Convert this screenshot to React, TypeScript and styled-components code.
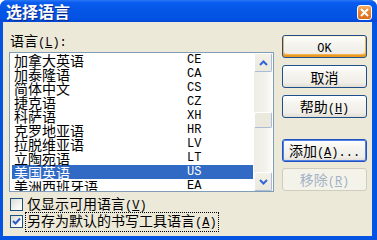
import styled, { createGlobalStyle } from "styled-components";

const GlobalStyle = createGlobalStyle`
  html, body {
    margin: 0;
    padding: 0;
    background: #ffffff;
  }
  body {
    font-family: "Noto Sans CJK SC", "Liberation Sans", sans-serif;
  }
`;

const Window = styled.div`
  width: 377px;
  height: 240px;
  display: flex;
  flex-direction: column;
  background: #0553e1;
  border-radius: 7px 7px 0 0;
  overflow: hidden;
`;

const TitleBar = styled.div`
  height: 22px;
  flex: none;
  display: flex;
  align-items: center;
  justify-content: space-between;
  padding: 0 5px 0 6px;
  background: linear-gradient(180deg, #2b78f6 0%, #0a5cf0 12%, #0356e6 45%, #0352e4 85%, #0448d2 100%);
`;

const Title = styled.span`
  color: #ffffff;
  font-size: 16px;
  font-weight: bold;
  line-height: 22px;
  text-shadow: 1px 1px 0 #0a2a8a;
`;

const CloseBox = styled.div`
  width: 15px;
  height: 15px;
  margin-top: 2px;
  box-sizing: border-box;
  border: 1px solid #ffffff;
  border-radius: 3px;
  background: linear-gradient(180deg, #f4b067 0%, #e8842f 45%, #dc6a1c 100%);
  display: flex;
  align-items: center;
  justify-content: center;
`;

const Body = styled.div`
  flex: 1;
  margin: 0 5px 4px 3px;
  background: #ece9d8;
  display: flex;
  gap: 8px;
  padding-left: 6px;
`;

const LeftColumn = styled.div`
  width: 265px;
  display: flex;
  flex-direction: column;
  padding-top: 10px;
`;

const FieldLabel = styled.div`
  font-size: 14px;
  line-height: 16px;
  height: 16px;
  padding-left: 1px;
  margin-bottom: 4px;
  color: #000;
`;

const Asc = styled.span`
  font-family: "Liberation Mono", "DejaVu Sans Mono", monospace;
  font-size: 12px;
`;

const Key = styled.span`
  text-decoration: underline;
`;

const ListBox = styled.div`
  height: 140px;
  box-sizing: border-box;
  border: 1px solid #7f9db9;
  background: #ffffff;
  display: flex;
`;

const Items = styled.div`
  flex: 1;
  overflow: hidden;
  padding: 0 1px 0 2px;
`;

const Row = styled.div<{ $selected?: boolean }>`
  display: grid;
  grid-template-columns: 173px 1fr;
  height: 14px;
  line-height: 14px;
  font-size: 14px;
  padding-left: 2px;
  white-space: nowrap;
  color: ${(p) => (p.$selected ? "#ffffff" : "#000000")};
  background: ${(p) => (p.$selected ? "#316ac5" : "transparent")};
`;

const Code = styled.span`
  font-family: "Liberation Mono", "DejaVu Sans Mono", monospace;
  font-size: 12px;
`;

const ScrollBar = styled.div`
  width: 18px;
  margin-right: 1px;
  display: flex;
  flex-direction: column;
  background: linear-gradient(90deg, #eeede5 0%, #f3f1ec 60%, #fbfbf8 100%);
`;

const ScrollButton = styled.div`
  height: 19px;
  flex: none;
  box-sizing: border-box;
  border: 1px solid;
  border-color: #ffffff #a9bbd9 #a9bbd9 #ffffff;
  border-radius: 2px;
  background: linear-gradient(180deg, #f3f1e8 0%, #ebe9dc 100%);
  display: flex;
  align-items: center;
  justify-content: center;
`;

const Track = styled.div`
  flex: 1;
`;

const Thumb = styled.div<{ $offset: number }>`
  height: 16px;
  margin-top: ${(p) => p.$offset}px;
  box-sizing: border-box;
  border: 1px solid;
  border-color: #ffffff #a9bbd9 #a9bbd9 #ffffff;
  border-radius: 2px;
  background: #ebe9dc;
`;

const Options = styled.div`
  margin-top: 4px;
  display: flex;
  flex-direction: column;
`;

const CheckRow = styled.div`
  height: 17px;
  display: flex;
  align-items: center;
  gap: 3px;
  padding-left: 1px;
  font-size: 14px;
  line-height: 15px;
`;

const Box = styled.div`
  width: 13px;
  height: 13px;
  flex: none;
  box-sizing: border-box;
  border: 1px solid #1c5180;
  background: linear-gradient(135deg, #dcdbd5 0%, #f4f4f0 60%, #ffffff 100%);
  display: flex;
  align-items: center;
  justify-content: center;
`;

const CheckText = styled.span<{ $focused?: boolean }>`
  padding: 0 1px;
  outline: ${(p) => (p.$focused ? "1px dotted #000" : "none")};
  white-space: nowrap;
`;

const RightColumn = styled.div`
  display: flex;
  flex-direction: column;
  gap: 7px;
  padding-top: 13px;
`;

const Button = styled.button<{ $variant?: "hot" | "default"; $gapBefore?: number }>`
  width: 85px;
  height: 23px;
  padding: 0;
  margin-top: ${(p) => p.$gapBefore ?? 0}px;
  box-sizing: border-box;
  border: 1px solid ${(p) => (p.$variant === "default" ? "#2150c0" : "#1d4f8c")};
  border-radius: 3px;
  background: linear-gradient(180deg, #ffffff 0%, #f5f4ef 35%, #efeee8 80%, #e2ddd2 100%);
  font-family: "Noto Sans CJK SC", sans-serif;
  font-size: 14px;
  line-height: 20px;
  color: #000000;
  box-shadow: ${(p) =>
    p.$variant === "hot"
      ? "inset 0 -2px 0 #e99a23, inset 2px -4px 0 -1px #f3b352, inset -2px -4px 0 -1px #f3b352, inset 0 1px 0 #fff2d4"
      : p.$variant === "default"
      ? "inset 0 0 0 1px #4f82e3"
      : "none"};

  &:disabled {
    border-color: #cfccc0;
    background: #f4f3ea;
    color: #a3b1c7;
  }
`;

const languages: [string, string][] = [
  ["加拿大英语", "CE"],
  ["加泰隆语", "CA"],
  ["简体中文", "CS"],
  ["捷克语", "CZ"],
  ["科萨语", "XH"],
  ["克罗地亚语", "HR"],
  ["拉脱维亚语", "LV"],
  ["立陶宛语", "LT"],
  ["美国英语", "US"],
  ["美洲西班牙语", "EA"],
  ["蒙古语", "MN"],
];

function Chevron({ up }: { up?: boolean }) {
  return (
    <svg width="9" height="6" viewBox="0 0 9 6">
      <polyline
        points={up ? "1,5 4.5,1.5 8,5" : "1,1 4.5,4.5 8,1"}
        fill="none"
        stroke="#3465d8"
        strokeWidth="2"
      />
    </svg>
  );
}

export default function App() {
  return (
    <>
      <GlobalStyle />
      <Window>
        <TitleBar>
          <Title>选择语言</Title>
          <CloseBox>
            <svg width="9" height="9" viewBox="0 0 9 9">
              <path d="M1 1 L8 8 M8 1 L1 8" stroke="#ffffff" strokeWidth="2" />
            </svg>
          </CloseBox>
        </TitleBar>
        <Body>
          <LeftColumn>
            <FieldLabel>
              语言<Asc>(<Key>L</Key>):</Asc>
            </FieldLabel>
            <ListBox>
              <Items>
                {languages.map(([name, code]) => (
                  <Row key={code} $selected={code === "US"}>
                    <span>{name}</span>
                    <Code>{code}</Code>
                  </Row>
                ))}
              </Items>
              <ScrollBar>
                <ScrollButton>
                  <Chevron up />
                </ScrollButton>
                <Track>
                  <Thumb $offset={40} />
                </Track>
                <ScrollButton>
                  <Chevron />
                </ScrollButton>
              </ScrollBar>
            </ListBox>
            <Options>
              <CheckRow>
                <Box />
                <CheckText>
                  仅显示可用语言<Asc>(<Key>V</Key>)</Asc>
                </CheckText>
              </CheckRow>
              <CheckRow>
                <Box>
                  <svg width="9" height="9" viewBox="0 0 9 9">
                    <polyline points="1,4 3.5,6.5 8,1.5" fill="none" stroke="#2c5cc5" strokeWidth="2" />
                  </svg>
                </Box>
                <CheckText $focused>
                  另存为默认的书写工具语言<Asc>(<Key>A</Key>)</Asc>
                </CheckText>
              </CheckRow>
            </Options>
          </LeftColumn>
          <RightColumn>
            <Button $variant="hot">
              <Asc>OK</Asc>
            </Button>
            <Button>取消</Button>
            <Button>
              帮助<Asc>(<Key>H</Key>)</Asc>
            </Button>
            <Button $variant="default" $gapBefore={14}>
              添加<Asc>(<Key>A</Key>)...</Asc>
            </Button>
            <Button $gapBefore={-1} disabled>
              移除<Asc>(<Key>R</Key>)</Asc>
            </Button>
          </RightColumn>
        </Body>
      </Window>
    </>
  );
}
